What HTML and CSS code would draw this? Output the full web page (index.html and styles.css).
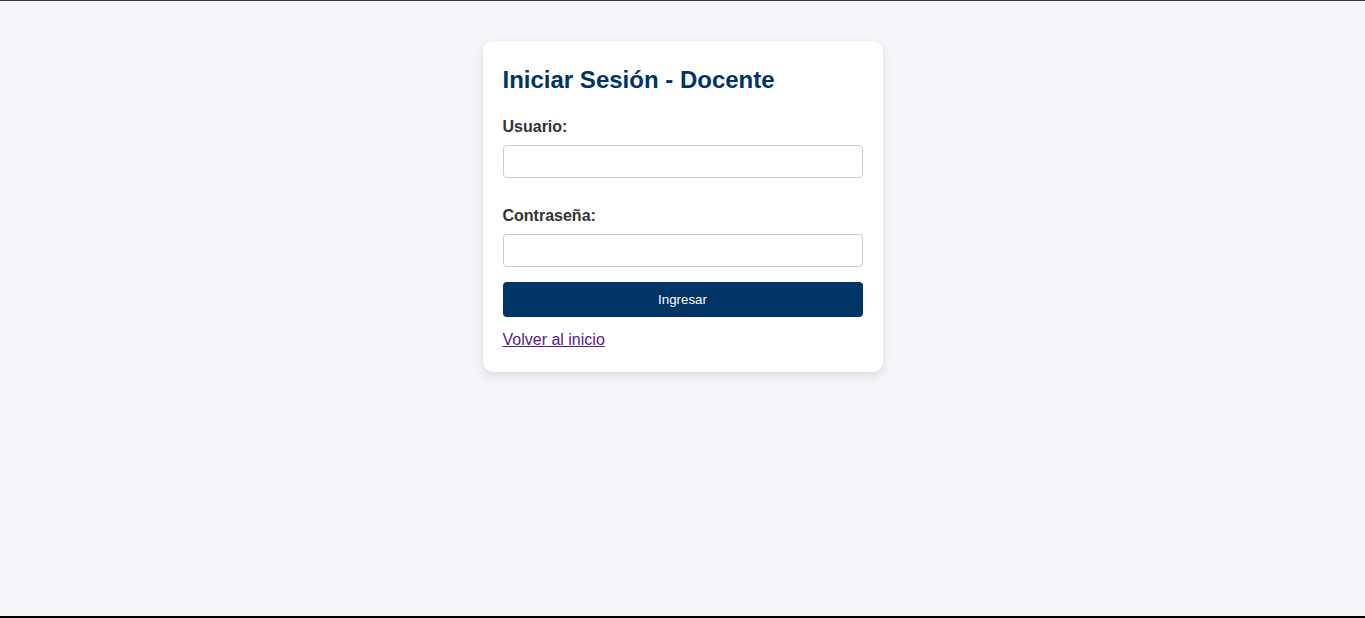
FILE: index.html
```html
<!DOCTYPE html>
<html lang="es">
<head>
<meta charset="utf-8">
<title>Iniciar Sesión - Docente</title>
<link rel="stylesheet" href="styles.css">
</head>
<body>
<main class="page">
  <div class="card">
    <h2 class="title">Iniciar Sesión - Docente</h2>
    <form class="form">
      <label class="label" for="usuario">Usuario:</label>
      <input class="input input-first" type="text" id="usuario">
      <label class="label" for="clave">Contraseña:</label>
      <input class="input" type="password" id="clave">
      <button class="btn" type="button">Ingresar</button>
    </form>
    <a class="back" href="#">Volver al inicio</a>
  </div>
</main>
</body>
</html>
```

FILE: styles.css
```css
html, body {
  margin: 0;
  padding: 0;
}

body {
  background: #f4f4f9;
  font-family: "Liberation Sans", Arial, sans-serif;
  height: 618px;
  box-sizing: border-box;
  border-top: 1px solid #3a3a3a;
  border-bottom: 2px solid #000;
  overflow: hidden;
}

.page {
  display: flex;
  justify-content: center;
  padding-top: 40px;
}

.card {
  width: 400px;
  box-sizing: border-box;
  background: #fff;
  border-radius: 10px;
  padding: 20px 20px 23px;
  box-shadow: 0 4px 10px rgba(0, 0, 0, 0.1);
}

.title {
  margin: 5px 0 24px;
  font-size: 24px;
  line-height: 28px;
  font-weight: bold;
  color: #003366;
}

.form {
  display: flex;
  flex-direction: column;
}

.label {
  display: block;
  font-size: 16px;
  font-weight: bold;
  color: #333;
  margin-bottom: 9px;
}

.input {
  width: 100%;
  box-sizing: border-box;
  padding: 8px;
  border: 1px solid #ccc;
  border-radius: 4px;
  font-family: "Liberation Sans", Arial, sans-serif;
  font-size: 13.333px;
  margin: 0 0 15px;
  background: #fff;
}

.input-first {
  margin-bottom: 29px;
}

.btn {
  width: 100%;
  padding: 10px;
  border: none;
  border-radius: 4px;
  background: #003366;
  color: #fff;
  font-family: "Liberation Sans", Arial, sans-serif;
  font-size: 13.333px;
  line-height: 15px;
  cursor: pointer;
}

.back {
  display: inline-block;
  margin-top: 14px;
  font-size: 16px;
  color: #551a8b;
}
```
